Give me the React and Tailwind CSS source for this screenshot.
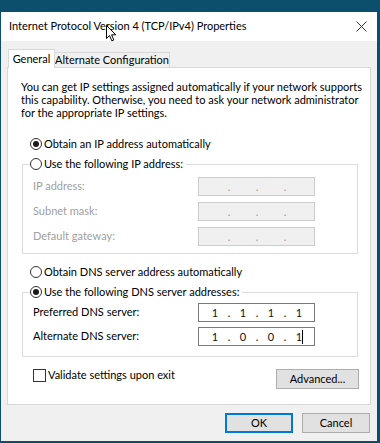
import React from "react";

const font = { fontFamily: "Lato, 'Noto Sans', sans-serif" };

const Radio = ({ checked }) => (
  <span className="w-[12px] h-[12px] rounded-full border border-[#333333] bg-white flex items-center justify-center shrink-0">
    {checked && <span className="w-[6px] h-[6px] rounded-full bg-[#1a1a1a]" />}
  </span>
);

const RadioRow = ({ checked, label }) => (
  <div className="flex items-center gap-[2px] h-[14px]">
    <Radio checked={checked} />
    <span className="text-[11px] text-[#000] leading-[14px] whitespace-nowrap">{label}</span>
  </div>
);

const IpBox = ({ parts, disabled, caret }) => (
  <div
    className={
      "w-[117px] h-[19px] border pl-[9px] flex items-center " +
      (disabled ? "border-[#cccccc] bg-[#f0f0f0]" : "border-[#7a7a7a] bg-white")
    }
  >
    <div className="grid grid-cols-[14px_14px_14px_14px_14px_14px_14px] text-[11px] leading-[14px]">
      {[0, 1, 2, 3].map((i) => (
        <React.Fragment key={i}>
          <span className="text-center text-[#111] relative">
            {parts ? parts[i] : ""}
            {caret && i === 3 && (
              <span className="absolute right-[3px] top-[0px] w-[1px] h-[14px] bg-black" />
            )}
          </span>
          {i < 3 && (
            <span className={"text-center " + (disabled ? "text-[#9a9a9a]" : "text-[#111]")}>.</span>
          )}
        </React.Fragment>
      ))}
    </div>
  </div>
);

const FieldRow = ({ label, disabled, parts, caret }) => (
  <div className="flex items-center h-[19px]">
    <span className={"w-[165px] text-[11px] " + (disabled ? "text-[#a0a0a0]" : "text-black")}>{label}</span>
    <IpBox parts={parts} disabled={disabled} caret={caret} />
  </div>
);

const Cursor = () => (
  <svg className="absolute left-[105px] top-[13px]" width="11" height="17" viewBox="0 0 11 17">
    <path d="M0.5 0.5 L0.5 13.5 L3.5 10.5 L5.8 15.8 L7.8 15 L5.6 9.8 L9.8 9.8 Z" fill="#fff" stroke="#000" strokeWidth="1" />
  </svg>
);

export default function App() {
  return (
    <div className="w-[380px] h-[443px] bg-[#0b4f6c] pt-[12px] pl-[1px] overflow-hidden" style={font}>
      <div className="w-[376px] h-[429px] bg-[#f0f0f0] flex flex-col">
        <div className="h-[29px] bg-white flex items-center justify-between pl-[8px] pr-[10px] relative">
          <span className="text-[11px] text-black">Internet Protocol Version 4 (TCP/IPv4) Properties</span>
          <svg width="11" height="11" viewBox="0 0 11 11">
            <path d="M0.5 0.5 L10.5 10.5 M10.5 0.5 L0.5 10.5" stroke="#333" strokeWidth="1" />
          </svg>
          <Cursor />
        </div>

        <div className="px-[6px] pt-[8px] flex flex-col">
          <div className="flex items-end pl-[1px] h-[18px]">
            <div className="h-[19px] w-[47px] bg-white border border-b-0 border-[#d9d9d9] text-[11px] text-black flex items-start justify-center pt-[1px] relative z-10 -mb-[1px]">
              General
            </div>
            <div className="h-[15px] w-[115px] border border-b-0 border-l-0 border-[#d9d9d9] text-[11px] text-black flex items-center justify-center whitespace-nowrap">
              Alternate Configuration
            </div>
          </div>

          <div className="h-[338px] bg-white border border-[#d9d9d9] flex flex-col">
            <p className="text-[11px] leading-[13px] text-black pl-[13px] pt-[12px] pr-[8px]">
              You can get IP settings assigned automatically if your network supports this capability. Otherwise, you need to ask your network administrator for the appropriate IP settings.
            </p>

            <div className="pl-[22px] mt-[18px]">
              <RadioRow checked label="Obtain an IP address automatically" />
            </div>

            <fieldset className="ml-[14px] w-[336px] border border-[#dcdcdc] mt-[6px]">
              <legend className="ml-[7px] pr-[3px]">
                <RadioRow label="Use the following IP address:" />
              </legend>
              <div className="flex flex-col gap-[6px] pl-[10px] pt-[6px] pb-[7px]">
                <FieldRow label="IP address:" disabled />
                <FieldRow label="Subnet mask:" disabled />
                <FieldRow label="Default gateway:" disabled />
              </div>
            </fieldset>

            <div className="pl-[22px] mt-[11px]">
              <RadioRow label="Obtain DNS server address automatically" />
            </div>

            <fieldset className="ml-[14px] w-[336px] border border-[#dcdcdc] mt-[6px]">
              <legend className="ml-[7px] pr-[3px]">
                <RadioRow checked label="Use the following DNS server addresses:" />
              </legend>
              <div className="flex flex-col gap-[5px] pl-[10px] pt-[4px] pb-[10px]">
                <FieldRow label="Preferred DNS server:" parts={["1", "1", "1", "1"]} />
                <FieldRow label="Alternate DNS server:" parts={["1", "0", "0", "1"]} caret />
              </div>
            </fieldset>

            <div className="flex justify-between items-start pl-[25px] pr-[11px] mt-[12px]">
              <div className="flex items-center gap-[2px] h-[13px]">
                <span className="w-[13px] h-[13px] border border-[#333333] bg-white" />
                <span className="text-[11px] text-black">Validate settings upon exit</span>
              </div>
              <button className="w-[83px] h-[20px] bg-[#e1e1e1] border border-[#adadad] text-[11px] text-black">
                Advanced...
              </button>
            </div>
          </div>

          <div className="flex justify-end gap-[9px] mt-[8px] pr-[1px]">
            <button className="w-[68px] h-[20px] bg-[#e1e1e1] border border-[#0078d7] outline outline-1 outline-[#0078d7] -outline-offset-2 text-[11px] text-black">
              OK
            </button>
            <button className="w-[68px] h-[20px] bg-[#e1e1e1] border border-[#adadad] text-[11px] text-black">
              Cancel
            </button>
          </div>
        </div>
      </div>
    </div>
  );
}
